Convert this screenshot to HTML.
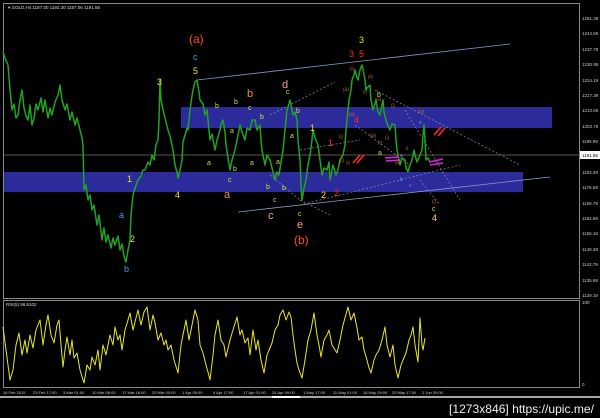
<!DOCTYPE html><html><head><meta charset="utf-8"><style>
html,body{margin:0;padding:0;background:#000;width:600px;height:418px;overflow:hidden}
svg{display:block}
text{font-family:"Liberation Sans",sans-serif}
</style></head><body>
<svg width="600" height="418" viewBox="0 0 600 418" xmlns="http://www.w3.org/2000/svg">
<rect width="600" height="418" fill="#000"/>
<rect x="3.5" y="3.5" width="576" height="295" fill="none" stroke="#888" stroke-width="1"/>
<rect x="3.5" y="300.5" width="576" height="87" fill="none" stroke="#888" stroke-width="1"/>
<line x1="0" y1="397" x2="600" y2="397" stroke="#ddd" stroke-width="1.5"/>
<line x1="272" y1="397" x2="300" y2="397" stroke="#fff" stroke-width="2"/>
<rect x="181" y="107" width="371" height="21" fill="#2b2b9c"/>
<rect x="4" y="172" width="519" height="20" fill="#2b2b9c"/>
<line x1="4" y1="155" x2="579" y2="155" stroke="#777" stroke-width="0.8"/>
<line x1="197" y1="80" x2="510" y2="44" stroke="#8a96c8" stroke-width="0.8"/>
<line x1="238" y1="212" x2="550" y2="177" stroke="#8a96c8" stroke-width="0.8"/>
<g stroke="#8890b0" stroke-width="0.7" stroke-dasharray="2,2" fill="none">
<line x1="270" y1="175" x2="300" y2="200"/><line x1="300" y1="200" x2="330" y2="215"/>
<line x1="270" y1="115" x2="335" y2="82"/><line x1="300" y1="150" x2="360" y2="140"/>
<line x1="375" y1="90" x2="520" y2="165"/><line x1="405" y1="110" x2="460" y2="200"/>
<line x1="355" y1="125" x2="410" y2="165"/><line x1="300" y1="205" x2="460" y2="165"/>
<line x1="420" y1="180" x2="440" y2="205"/>
</g>
<polyline fill="none" stroke="#22a322" stroke-width="1.5" stroke-linejoin="round" points="3,52 5,58 8,65 10,90 12,110 14,104 16,118 18,115 20,100 22,90 24,108 26,116 28,120 30,105 32,125 34,118 36,104 38,110 41,98 43,112 45,100 48,118 50,108 52,115 55,102 58,95 60,85 62,100 65,110 67,104 70,120 72,112 75,125 77,118 80,130 82,138 83,145 84,190 86,185 88,200 90,195 92,210 94,205 97,225 99,215 102,240 104,228 106,242 108,235 111,248 113,238 115,245 118,236 120,250 122,244 124,256 126,262 128,250 130,240 131,215 133,195 135,188 138,180 141,176 143,170 145,170 148,162 150,165 152,155 154,160 156,145 158,140 159,120 160,80 161,100 163,110 165,118 168,130 170,136 173,150 175,165 177,172 178,178 180,170 182,160 183,142 185,135 187,128 188,130 190,110 192,96 193,90 195,82 197,80 199,92 200,100 203,104 205,115 207,110 210,140 212,134 215,150 217,140 220,130 221,124 223,120 225,132 226,145 228,158 230,170 232,160 235,150 237,140 240,125 242,132 245,140 247,128 250,130 252,120 255,120 257,130 260,125 261,140 262,150 264,160 265,165 267,155 270,160 272,168 275,180 277,172 279,175 281,162 283,150 285,130 287,110 289,104 290,100 292,110 293,115 295,112 297,120 298,140 300,160 301,185 302,200 304,188 306,180 308,165 310,155 312,140 313,130 315,138 318,145 320,160 322,175 324,168 327,170 329,162 330,180 332,170 333,165 336,175 338,170 340,160 343,155 345,145 346,130 348,110 349,100 351,90 352,80 354,75 355,70 357,78 358,80 360,70 362,65 364,74 365,80 366,90 367,88 370,85 371,100 373,110 375,104 376,100 378,112 380,115 382,105 383,100 384,112 386,120 388,126 390,130 392,124 395,125 396,140 397,150 399,160 400,165 402,158 405,160 406,168 408,172 410,165 412,160 414,150 415,155 417,162 418,160 420,155 422,150 423,135 424,125 425,140 426,160 428,158 430,162"/>
<polyline fill="none" stroke="#e8e820" stroke-width="1" stroke-linejoin="round" points="3,327 6,350 10,380 13,370 16,345 19,333 22,355 25,340 27,353 30,335 33,348 36,330 40,320 43,345 46,325 48,315 51,335 54,343 57,325 59,320 61,345 63,367 65,350 67,337 70,355 72,340 74,358 77,353 80,370 84,383 87,365 90,370 92,357 95,365 98,350 100,370 103,345 106,355 110,335 113,345 115,327 118,340 120,335 122,350 125,330 128,320 130,313 133,330 136,318 138,310 141,325 144,312 147,307 150,330 153,315 155,323 158,340 161,333 164,345 166,340 168,350 171,345 174,360 178,373 181,345 184,330 186,320 189,340 192,325 195,310 198,320 200,345 203,353 206,365 208,372 210,380 213,355 215,335 218,320 221,340 224,345 226,357 230,340 233,330 237,317 240,335 242,330 245,343 248,338 250,355 253,330 256,350 258,340 261,360 264,373 267,355 269,350 272,343 275,330 278,325 280,315 283,310 286,320 289,312 291,317 293,335 295,350 297,363 299,370 302,378 305,360 308,340 311,330 314,313 317,335 319,345 321,357 324,340 327,335 329,330 332,345 335,350 337,353 340,340 343,325 345,318 348,307 351,320 354,313 357,328 359,340 362,337 364,350 367,360 369,368 371,373 374,360 376,355 379,350 382,340 385,327 387,345 390,357 393,345 395,365 398,378 401,365 403,360 406,353 409,340 411,335 413,327 415,345 418,362 420,318 422,345 423,350 425,338"/>
<g stroke="#ff2a2a" stroke-width="1.6"><line x1="353" y1="163" x2="360" y2="155"/><line x1="357" y1="163" x2="364" y2="155"/><line x1="434" y1="135" x2="441" y2="127"/><line x1="438" y1="136" x2="445" y2="128"/></g>
<g stroke="#e020e0" stroke-width="1.5"><line x1="385" y1="158" x2="399" y2="157"/><line x1="386" y1="161" x2="400" y2="160"/><line x1="429" y1="162" x2="443" y2="159"/><line x1="430" y1="165" x2="443" y2="163"/></g>
<g font-size="12"><text x="189" y="43" fill="#ff4a1a">(a)</text><text x="294" y="244" fill="#ff4a1a">(b)</text></g>
<g font-size="9" fill="#f0e020">
<text x="193" y="74">5</text><text x="157" y="85">3</text><text x="127" y="182">1</text><text x="175" y="198">4</text><text x="130" y="242">2</text>
<text x="310" y="131">1</text><text x="321" y="198">2</text><text x="359" y="43">3</text><text x="432" y="221">4</text>
</g>
<g font-size="9" fill="#2aa8e0"><text x="193" y="60">c</text><text x="119" y="218">a</text><text x="124" y="272">b</text></g>
<g font-size="11" fill="#f09020"><text x="247" y="97">b</text><text x="224" y="198">a</text></g>
<g font-size="11" fill="#f0a090"><text x="282" y="88">d</text><text x="268" y="219">c</text><text x="297" y="228">e</text></g>
<g font-size="9" fill="#ff2a2a"><text x="349" y="57">3</text><text x="359" y="57">5</text><text x="328" y="146">1</text><text x="334" y="196">2</text><text x="354" y="123">4</text></g>
<g font-size="7" fill="#c8e040">
<text x="215" y="108">b</text><text x="248" y="110">c</text><text x="260" y="119">b</text><text x="286" y="94">c</text><text x="296" y="113">b</text>
<text x="230" y="133">a</text><text x="290" y="138">a</text><text x="207" y="165">a</text><text x="250" y="165">a</text><text x="276" y="164">a</text>
<text x="233" y="171">b</text><text x="228" y="182">c</text><text x="282" y="190">b</text><text x="273" y="202">c</text><text x="298" y="216">c</text>
<text x="266" y="189">b</text><text x="234" y="104">b</text><text x="377" y="97">b</text><text x="378" y="155">a</text><text x="432" y="211">c</text>
</g>
<g font-size="4.5" fill="#c87830">
<text x="350" y="70">(i)</text><text x="343" y="91">(iii)</text><text x="368" y="78">(ii)</text><text x="363" y="93">(i)</text><text x="375" y="101">(iv)</text>
<text x="391" y="107">(i)</text><text x="349" y="116">(iii)</text><text x="370" y="137">(iii)</text><text x="378" y="144">(i)</text><text x="385" y="139">(i)</text>
<text x="339" y="138">(i)</text><text x="346" y="164">(i)</text><text x="395" y="164">(iii)</text><text x="418" y="113">(iv)</text><text x="432" y="203">(i)</text><text x="340" y="162">(i)</text>
</g>
<g font-size="5" fill="#5aa0e0"><text x="400" y="157">a</text><text x="406" y="150">c</text><text x="400" y="181">b</text><text x="409" y="187">c</text><text x="419" y="124">e</text></g>
<text x="8" y="9" font-size="4.5" fill="#ddd">▾ GOLD,H4  1187.00 1192.30 1187.06 1191.55</text>
<text x="6" y="306" font-size="4.5" fill="#ddd">RSI(5) 56.6102</text>
<g font-size="4.5" fill="#ccc">
<text x="582" y="20">1251.39</text><text x="582" y="35">1244.59</text><text x="582" y="51">1237.79</text><text x="582" y="66">1230.99</text>
<text x="582" y="82">1224.19</text><text x="582" y="97">1217.39</text><text x="582" y="112">1210.59</text><text x="582" y="128">1203.79</text>
<text x="582" y="143">1196.99</text><text x="582" y="174">1183.39</text><text x="582" y="189">1176.59</text><text x="582" y="205">1169.79</text>
<text x="582" y="220">1162.99</text><text x="582" y="235">1156.19</text><text x="582" y="251">1149.39</text><text x="582" y="266">1142.79</text>
<text x="582" y="282">1135.99</text><text x="582" y="297">1129.19</text><text x="582" y="304">100</text><text x="582" y="386">0</text>
</g>
<rect x="580" y="151" width="20" height="8" fill="#fff"/><text x="582" y="157" font-size="4.5" fill="#000">1191.55</text>
<g font-size="4" fill="#ccc">
<text x="3" y="394">16 Feb 2015</text><text x="33" y="394">23 Feb 17:00</text><text x="63" y="394">3 Mar 01:00</text><text x="92" y="394">10 Mar 08:00</text>
<text x="122" y="394">17 Mar 16:00</text><text x="152" y="394">25 Mar 00:00</text><text x="182" y="394">1 Apr 09:00</text><text x="213" y="394">9 Apr 17:00</text>
<text x="243" y="394">17 Apr 01:00</text><text x="272" y="394">24 Apr 09:00</text><text x="303" y="394">1 May 17:00</text><text x="333" y="394">11 May 01:00</text>
<text x="363" y="394">18 May 09:00</text><text x="392" y="394">25 May 17:00</text><text x="422" y="394">2 Jun 05:00</text>
</g>
<text x="594" y="413" font-size="12" fill="#eee" text-anchor="end" textLength="145" lengthAdjust="spacingAndGlyphs">[1273x846] https://upic.me/</text>
</svg>
</body></html>
